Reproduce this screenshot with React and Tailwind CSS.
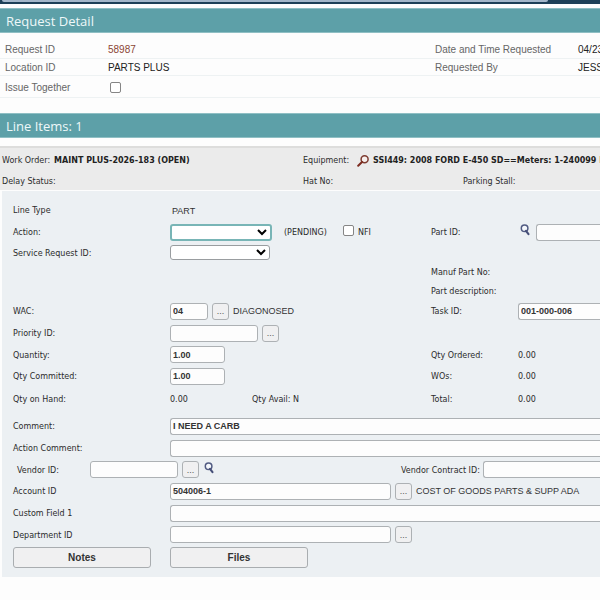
import { clsx } from "clsx";

const INPUT =
  "h-[17px] min-w-0 rounded-[3px] border border-[#adb1b4] bg-[#fdfdfd] px-[2px] font-['Liberation_Sans',sans-serif] text-[9px] font-bold text-[#333] outline-none";
const OPEN_END = "flex-1 rounded-r-none border-r-0";
// captions sit slightly below the middle of their fields
const CAPTIONS = "[&>label]:pt-[2px] [&>span]:pt-[2px]";
const ROW = "grid grid-cols-[157px_261px_87px_minmax(0,1fr)] items-center";
const WIDE_ROW = "grid grid-cols-[157px_minmax(0,1fr)] items-center";

function SectionTitle({ children }) {
  return (
    <h2 className="flex h-[25px] items-center border-y border-[#8fbfc4] bg-[#5da0a8] px-[6px] font-['Open_Sans',sans-serif] text-[13px] text-[#eef8f9]">
      {children}
    </h2>
  );
}

function Lookup({ label }) {
  return (
    <button
      type="button"
      aria-label={label}
      className="flex h-[17px] w-[17px] shrink-0 items-center justify-center rounded-[3px] border border-[#adb1b4] bg-[#f0f0f1] font-['Liberation_Sans',sans-serif] text-[9px] text-[#555]"
    >
      ...
    </button>
  );
}

function SearchIcon() {
  return (
    <svg viewBox="0 0 10 12" className="h-[12px] w-[10px]" fill="none">
      <circle cx="4.6" cy="4.2" r="3.3" fill="#f4f7fb" stroke="#515b82" strokeWidth="1.5" />
      <path d="M6 6.8 8.5 10.2" stroke="#464f78" strokeWidth="2.1" strokeLinecap="round" />
    </svg>
  );
}

function EquipmentIcon() {
  return (
    <svg viewBox="0 0 12 12" className="h-[12px] w-[12px]" fill="none">
      <circle cx="7.6" cy="4.3" r="3.5" fill="#f6efed" stroke="#7d3b30" strokeWidth="1.5" />
      <path d="M5 7 1.2 10.8" stroke="#7d2c20" strokeWidth="2" strokeLinecap="round" />
    </svg>
  );
}

function Value({ className, children }) {
  return (
    <span
      className={clsx(
        "font-['Liberation_Sans',sans-serif] whitespace-nowrap text-[#333]",
        className
      )}
    >
      {children}
    </span>
  );
}

function DetailRow({ className, children }) {
  return (
    <div
      className={clsx(
        "grid grid-cols-[103px_327px_143px_minmax(0,1fr)] items-center border-b border-[#eef2f3] pt-[2px] pl-[5px]",
        className
      )}
    >
      {children}
    </div>
  );
}

function RequestDetail() {
  return (
    <section className="pb-[15px] font-['Liberation_Sans',sans-serif] text-[10px] text-[#666]">
      <DetailRow className="mt-[7px] h-[19px]">
        <span>Request ID</span>
        <a href="#request" className="text-[#8b4535]">58987</a>
        <span>Date and Time Requested</span>
        <span className="text-[#222]">04/23</span>
      </DetailRow>
      <DetailRow className="h-[17px]">
        <span>Location ID</span>
        <span className="text-[#222]">PARTS PLUS</span>
        <span>Requested By</span>
        <span className="text-[#222]">JESS</span>
      </DetailRow>
      <DetailRow className="h-[22px]">
        <label htmlFor="together">Issue Together</label>
        <input
          id="together"
          type="checkbox"
          className="ml-[2px] h-[11px] w-[11px] appearance-none rounded-[2px] border border-[#858585] bg-white"
        />
      </DetailRow>
    </section>
  );
}

function WorkOrderHeader() {
  return (
    <div className="border-t-2 border-[#dddddc] bg-[#ebebeb] pl-[2px] whitespace-nowrap">
      <div className="grid h-[24px] grid-cols-[301px_minmax(0,1fr)] items-center pt-[2px]">
        <div className="flex gap-[4px]">
          <span>Work Order:</span>
          <b className="text-[#222]">MAINT PLUS-2026-183 (OPEN)</b>
        </div>
        <div className="flex items-center overflow-hidden">
          <span className="w-[54px] shrink-0">Equipment:</span>
          <a href="#equipment" aria-label="Equipment lookup" className="mr-[4px] shrink-0">
            <EquipmentIcon />
          </a>
          <b className="text-[#222]">SSI449: 2008 FORD E-450 SD==Meters: 1-240099 M</b>
        </div>
      </div>
      <div className="grid h-[18px] grid-cols-[301px_160px_minmax(0,1fr)] items-center pt-[2px]">
        <span>Delay Status:</span>
        <span>Hat No:</span>
        <span>Parking Stall:</span>
      </div>
    </div>
  );
}

function LineItemForm() {
  return (
    <form className="mt-[1px] ml-[2px] bg-[#ecf0f3] pt-[8px] pb-[9px] pl-[11px]">
      <div className={clsx(ROW, CAPTIONS, "h-[22px]")}>
        <span>Line Type</span>
        <Value className="pl-[2px] text-[9px]">PART</Value>
      </div>
      <div className={clsx(ROW, CAPTIONS, "h-[22px]")}>
        <label htmlFor="action">Action:</label>
        <div className={clsx("flex items-center", CAPTIONS)}>
          <select
            id="action"
            className="h-[17px] w-[102px] rounded-[3px] border-2 border-[#78b5b6] bg-white text-[9px] text-black outline-none"
          />
          <span className="ml-[12px] w-[59px]">(PENDING)</span>
          <input
            id="nfi"
            type="checkbox"
            className="mr-[4px] mb-[3px] h-[11px] w-[11px] appearance-none rounded-[2px] border border-[#858585] bg-white"
          />
          <label htmlFor="nfi">NFI</label>
        </div>
        <label htmlFor="part">Part ID:</label>
        <div className="flex items-center gap-[6px] pl-[2px]">
          <button type="button" aria-label="Find part" className="pb-[4px]">
            <SearchIcon />
          </button>
          <input id="part" className={clsx(INPUT, OPEN_END)} />
        </div>
      </div>
      <div className={clsx(ROW, CAPTIONS, "h-[19px]")}>
        <label htmlFor="service">Service Request ID:</label>
        <select
          id="service"
          className="h-[15px] w-[100px] rounded-[3px] border border-[#999da0] bg-white text-[9px] text-black"
        />
      </div>
      <div className={clsx(ROW, CAPTIONS, "h-[19px]")}>
        <span className="col-start-3">Manuf Part No:</span>
      </div>
      <div className={clsx(ROW, CAPTIONS, "h-[19px]")}>
        <span className="col-start-3 whitespace-nowrap">Part description:</span>
      </div>
      <div className={clsx(ROW, CAPTIONS, "h-[22px]")}>
        <label htmlFor="wac">WAC:</label>
        <div className="flex items-center gap-[4px]">
          <input id="wac" defaultValue="04" className={clsx(INPUT, "w-[38px]")} />
          <Lookup label="Find WAC" />
          <Value className="text-[9px]">DIAGONOSED</Value>
        </div>
        <label htmlFor="task">Task ID:</label>
        <div className="flex">
          <input id="task" defaultValue="001-000-006" className={clsx(INPUT, OPEN_END)} />
        </div>
      </div>
      <div className={clsx(ROW, CAPTIONS, "h-[22px]")}>
        <label htmlFor="priority">Priority ID:</label>
        <div className="flex items-center gap-[4px]">
          <input id="priority" className={clsx(INPUT, "w-[88px]")} />
          <Lookup label="Find priority" />
        </div>
      </div>
      <div className={clsx(ROW, CAPTIONS, "h-[21px]")}>
        <label htmlFor="qty">Quantity:</label>
        <input id="qty" defaultValue="1.00" className={clsx(INPUT, "w-[55px]")} />
        <span>Qty Ordered:</span>
        <span>0.00</span>
      </div>
      <div className={clsx(ROW, CAPTIONS, "h-[22px]")}>
        <label htmlFor="committed">Qty Committed:</label>
        <input id="committed" defaultValue="1.00" className={clsx(INPUT, "w-[55px]")} />
        <span>WOs:</span>
        <span>0.00</span>
      </div>
      <div className={clsx(ROW, CAPTIONS, "h-[24px]")}>
        <span>Qty on Hand:</span>
        <div className={clsx("flex", CAPTIONS)}>
          <span className="w-[82px]">0.00</span>
          <span>Qty Avail: N</span>
        </div>
        <span>Total:</span>
        <span>0.00</span>
      </div>

      <div className={clsx(WIDE_ROW, CAPTIONS, "mt-[4px] h-[22px]")}>
        <label htmlFor="comment">Comment:</label>
        <div className="flex">
          <input id="comment" defaultValue="I NEED A CARB" className={clsx(INPUT, OPEN_END)} />
        </div>
      </div>
      <div className={clsx(WIDE_ROW, CAPTIONS, "h-[22px]")}>
        <label htmlFor="actionComment">Action Comment:</label>
        <div className="flex">
          <input id="actionComment" className={clsx(INPUT, OPEN_END)} />
        </div>
      </div>
      <div className={clsx("flex h-[21px] items-center", CAPTIONS)}>
        <label htmlFor="vendor" className="w-[77px] pl-[4px]">Vendor ID:</label>
        <div className="flex w-[311px] items-center gap-[4px]">
          <input id="vendor" className={clsx(INPUT, "w-[88px]")} />
          <Lookup label="List vendors" />
          <button type="button" aria-label="Find vendor" className="ml-[1px] pb-[4px]">
            <SearchIcon />
          </button>
        </div>
        <label htmlFor="contract" className="w-[82px] whitespace-nowrap">
          Vendor Contract ID:
        </label>
        <input id="contract" className={clsx(INPUT, OPEN_END)} />
      </div>
      <div className={clsx(WIDE_ROW, CAPTIONS, "h-[22px]")}>
        <label htmlFor="account">Account ID</label>
        <div className="flex items-center gap-[4px]">
          <input id="account" defaultValue="504006-1" className={clsx(INPUT, "w-[221px]")} />
          <Lookup label="Find account" />
          <Value className="text-[9px]">COST OF GOODS PARTS &amp; SUPP ADA</Value>
        </div>
      </div>
      <div className={clsx(WIDE_ROW, CAPTIONS, "h-[22px]")}>
        <label htmlFor="custom">Custom Field 1</label>
        <div className="flex">
          <input id="custom" className={clsx(INPUT, OPEN_END)} />
        </div>
      </div>
      <div className={clsx(WIDE_ROW, CAPTIONS, "h-[21px]")}>
        <label htmlFor="department">Department ID</label>
        <div className="flex items-center gap-[4px]">
          <input id="department" className={clsx(INPUT, "w-[221px]")} />
          <Lookup label="Find department" />
        </div>
      </div>
      <div className="mt-[2px] flex gap-[19px] font-['Liberation_Sans',sans-serif] text-[10px] font-bold text-[#333]">
        <button type="button" className="h-[21px] w-[138px] rounded-[3px] border border-[#a9adb0] bg-[#f0f0f1]">
          Notes
        </button>
        <button type="button" className="h-[21px] w-[138px] rounded-[3px] border border-[#a9adb0] bg-[#f0f0f1]">
          Files
        </button>
      </div>
    </form>
  );
}

export default function App() {
  return (
    <main className="min-h-screen overflow-hidden bg-[#fdfdfd] font-['DejaVu_Sans',sans-serif] text-[8px] leading-[12px] text-[#2b2b2b]">
      <div className="h-[4px] bg-[#1d4058]">
        <div className="ml-[2px] h-[2px] w-[91%] rounded-b-[2px] bg-[#a3b7ca]" />
      </div>
      <div className="mt-[4px]">
        <SectionTitle>Request Detail</SectionTitle>
      </div>
      <RequestDetail />
      <SectionTitle>Line Items: 1</SectionTitle>
      <div className="mt-[8px]">
        <WorkOrderHeader />
        <LineItemForm />
      </div>
    </main>
  );
}
